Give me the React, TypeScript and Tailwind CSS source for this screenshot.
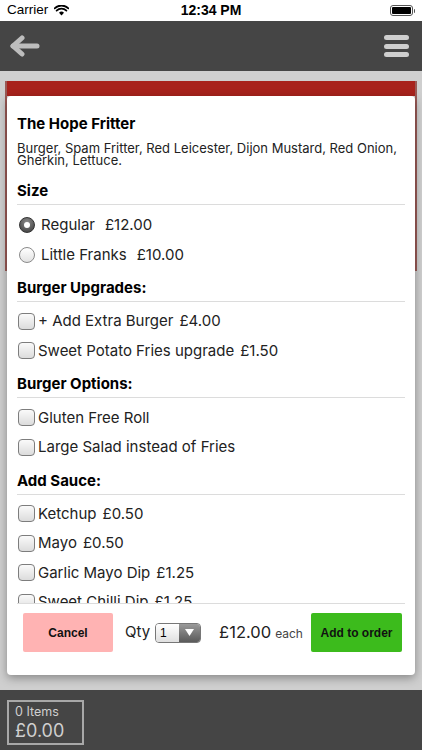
import React from "react";

const MF = { fontFamily: "Inter, 'Open Sans', sans-serif" };

function Radio({ checked }: { checked?: boolean }) {
  return checked ? (
    <span className="w-[16px] h-[16px] rounded-full flex items-center justify-center shrink-0 bg-[radial-gradient(circle_at_50%_30%,#8a8a8a,#3a3a3a)] border border-[#333]">
      <span className="w-[6px] h-[6px] rounded-full bg-white" />
    </span>
  ) : (
    <span className="w-[16px] h-[16px] rounded-full shrink-0 border border-[#8a8a8a] bg-[linear-gradient(#ffffff,#e2e2e2)]" />
  );
}

function Check() {
  return (
    <span className="w-[17px] h-[17px] rounded-[4px] shrink-0 border border-[#7d7d7d] bg-[linear-gradient(#fafafa,#dcdcdc)]" />
  );
}

function Heading({ children }: { children: React.ReactNode }) {
  return (
    <div>
      <div className="h-[18px] leading-[18px] text-[15px] font-bold text-black">{children}</div>
      <div className="mt-[4px] h-px bg-[#dcdcdc]" />
    </div>
  );
}

function RadioRow({ label, price, checked }: { label: string; price: string; checked?: boolean }) {
  return (
    <div className="h-[29.5px] flex items-center pl-[2px] text-[15px] text-[#222]">
      <Radio checked={checked} />
      <span className="ml-[6px]">{label}</span>
      <span className="ml-[10px]">{price}</span>
    </div>
  );
}

function CheckRow({ label, price }: { label: string; price?: string }) {
  return (
    <div className="h-[29.5px] flex items-center pl-[1px] text-[15px] text-[#222]">
      <Check />
      <span className="ml-[3px]">{label}</span>
      {price && <span className="ml-[6px]">{price}</span>}
    </div>
  );
}

export default function App() {
  return (
    <div className="relative w-[422px] h-[750px] overflow-hidden flex flex-col bg-[#cfcfcf]">
      {/* status bar */}
      <div className="h-[21px] bg-white flex items-center px-[7px] text-[13.5px] text-black relative" style={{ fontFamily: "'Liberation Sans', Arial, sans-serif" }}>
        <span>Carrier</span>
        <svg className="ml-[6px]" width="15" height="11" viewBox="0 0 15 11">
          <path d="M7.5 10.5 L5 7.8 A3.6 3.6 0 0 1 10 7.8 Z" fill="#000" />
          <path d="M2.6 5.6 A7 7 0 0 1 12.4 5.6" stroke="#000" strokeWidth="1.8" fill="none" strokeLinecap="round" />
          <path d="M0.6 3.3 A10 10 0 0 1 14.4 3.3" stroke="#000" strokeWidth="1.8" fill="none" strokeLinecap="round" />
        </svg>
        <span className="absolute left-0 right-0 text-center font-bold text-[14px] pointer-events-none">12:34 PM</span>
        <div className="ml-auto flex items-center">
          <div className="w-[23px] h-[11px] rounded-[3px] border border-[#555] p-[1px]">
            <div className="w-full h-full rounded-[1px] bg-black" />
          </div>
          <div className="w-[1.5px] h-[4px] bg-[#555] ml-[1px] rounded-r" />
        </div>
      </div>

      {/* nav bar */}
      <div className="h-[50px] bg-[#454545] flex items-center justify-between px-[9px]">
        <svg width="32" height="22" viewBox="0 0 32 22">
          <path d="M4 11 H28" stroke="#bdbdbd" strokeWidth="5" strokeLinecap="round" />
          <path d="M13 3 L4 11 L13 19" stroke="#bdbdbd" strokeWidth="5" strokeLinecap="round" strokeLinejoin="round" fill="none" />
        </svg>
        <div className="flex flex-col gap-[3.5px] mr-[4px]">
          <div className="w-[25px] h-[5px] rounded-full bg-[#cfcfcf]" />
          <div className="w-[25px] h-[5px] rounded-full bg-[#cfcfcf]" />
          <div className="w-[25px] h-[5px] rounded-full bg-[#cfcfcf]" />
        </div>
      </div>

      {/* page content behind overlay */}
      <div className="flex-1 px-[5px] pt-[10px]">
        <div className="h-[190px] border-x-2 border-[#9a5a56] bg-[#cfcfcf]">
          <div className="h-[15px] bg-[#a8221c]" />
        </div>
      </div>

      {/* bottom bar */}
      <div className="h-[60px] bg-[#454545] pt-[10px] px-[7px]" style={MF}>
        <div className="w-[77px] h-[45px] border-2 border-[#a8a8a8] px-[6px] pt-[2px] text-[#cfcfcf]">
          <div className="text-[12.5px] leading-[16px]">0 Items</div>
          <div className="text-[18px] leading-[22px]">£0.00</div>
        </div>
      </div>

      {/* modal */}
      <div className="absolute left-[7px] top-[96px] w-[408px] h-[579px] bg-white rounded-[4px] shadow-[0_3px_10px_rgba(0,0,0,0.35)] flex flex-col" style={MF}>
        <div className="h-[507px] overflow-hidden pl-[10px] pr-[10px] pt-[19px]">
          <div className="h-[18px] leading-[18px] text-[15px] font-bold text-black">The Hope Fritter</div>
          <div className="mt-[9px] text-[13px] leading-[12px] text-[#222]">
            Burger, Spam Fritter, Red Leicester, Dijon Mustard, Red Onion, Gherkin, Lettuce.
          </div>
          <div className="mt-[16px]">
            <Heading>Size</Heading>
          </div>
          <div className="mt-[5.5px]">
            <RadioRow label="Regular" price="£12.00" checked />
            <RadioRow label="Little Franks" price="£10.00" />
          </div>
          <div className="mt-[9px]">
            <Heading>Burger Upgrades:</Heading>
          </div>
          <div className="mt-[5px]">
            <CheckRow label="+ Add Extra Burger" price="£4.00" />
            <CheckRow label="Sweet Potato Fries upgrade" price="£1.50" />
          </div>
          <div className="mt-[9.5px]">
            <Heading>Burger Options:</Heading>
          </div>
          <div className="mt-[5px]">
            <CheckRow label="Gluten Free Roll" />
            <CheckRow label="Large Salad instead of Fries" />
          </div>
          <div className="mt-[9.5px]">
            <Heading>Add Sauce:</Heading>
          </div>
          <div className="mt-[4.5px]">
            <CheckRow label="Ketchup" price="£0.50" />
            <CheckRow label="Mayo" price="£0.50" />
            <CheckRow label="Garlic Mayo Dip" price="£1.25" />
            <CheckRow label="Sweet Chilli Dip" price="£1.25" />
          </div>
        </div>
        <div className="mx-[10px] h-px bg-[#dcdcdc]" />
        <div className="flex items-center pl-[16px] pr-[13px] pt-[9px]">
          <div className="w-[90px] h-[39px] bg-[#ffb3b3] rounded-[2px] flex items-center justify-center text-[12px] font-bold text-[#111]" style={{ fontFamily: "'Liberation Sans', Arial, sans-serif" }}>
            Cancel
          </div>
          <span className="ml-[12px] text-[15px] text-[#222]">Qty</span>
          <div className="ml-[5px] w-[46px] h-[20px] rounded-[4px] border border-[#777] flex overflow-hidden">
            <div className="flex-1 bg-[linear-gradient(#ffffff,#e0e0e0)] text-[12px] leading-[18px] pl-[4px] text-black" style={{ fontFamily: "'Liberation Sans', Arial, sans-serif" }}>1</div>
            <div className="w-[21px] bg-[linear-gradient(#9a9a9a,#5a5a5a)] flex items-center justify-center">
              <svg width="9" height="7" viewBox="0 0 9 7"><path d="M0 0 H9 L4.5 7 Z" fill="#fff" /></svg>
            </div>
          </div>
          <span className="ml-[18px] text-[16.5px] text-[#222]">£12.00</span>
          <span className="ml-[4px] text-[12px] text-[#444] mt-[2px]">each</span>
          <div className="ml-auto w-[91px] h-[39px] bg-[#3cbb1c] rounded-[2px] flex items-center justify-center text-[12px] font-bold text-[#111]" style={{ fontFamily: "'Liberation Sans', Arial, sans-serif" }}>
            Add to order
          </div>
        </div>
      </div>
    </div>
  );
}
